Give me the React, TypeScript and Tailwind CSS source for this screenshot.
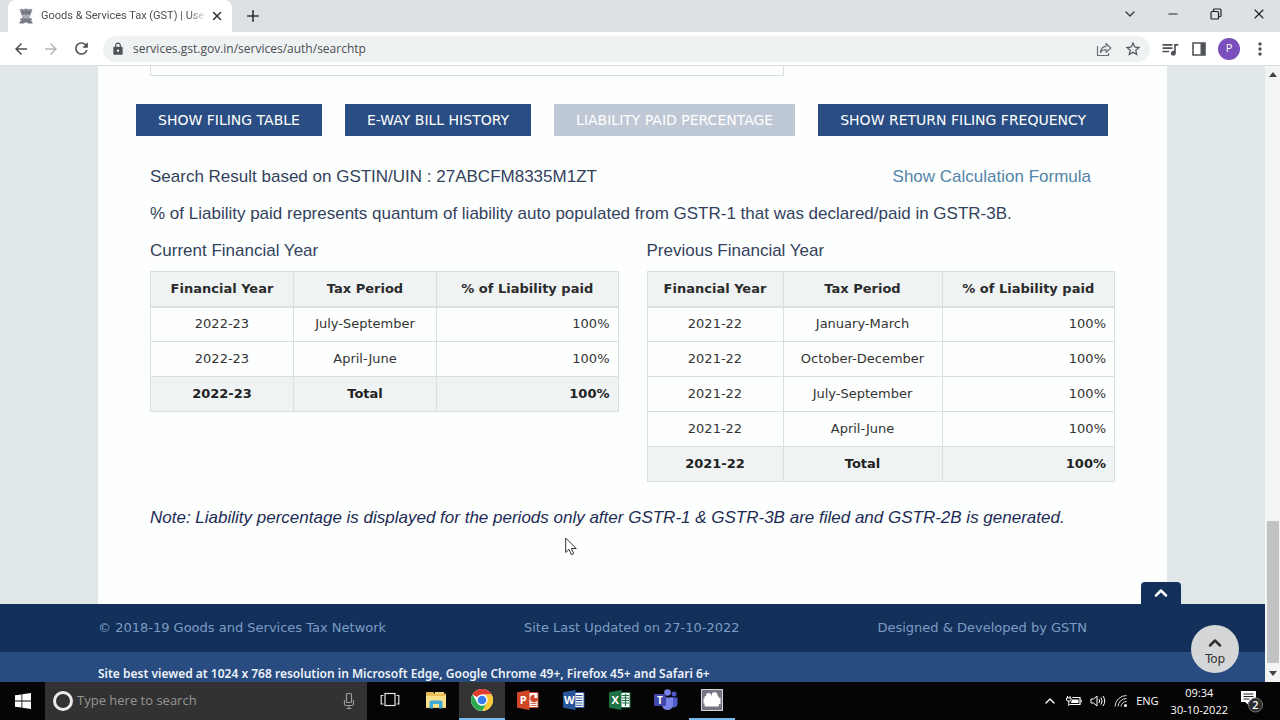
import { useState } from 'react';
import type { ReactNode } from 'react';
import { ChevronDown, ChevronUp, Minus, Plus, X } from 'lucide-react';
import { MdArrowBack, MdArrowForward, MdLock, MdMoreVert, MdQueueMusic, MdRefresh, MdStarBorder } from 'react-icons/md';

type Row = { year: string; period: string; paid: string };

const currentYear: Row[] = [
  { year: '2022-23', period: 'July-September', paid: '100%' },
  { year: '2022-23', period: 'April-June', paid: '100%' },
];

const previousYear: Row[] = [
  { year: '2021-22', period: 'January-March', paid: '100%' },
  { year: '2021-22', period: 'October-December', paid: '100%' },
  { year: '2021-22', period: 'July-September', paid: '100%' },
  { year: '2021-22', period: 'April-June', paid: '100%' },
];

const actions = [
  { label: 'SHOW FILING TABLE', disabled: false },
  { label: 'E-WAY BILL HISTORY', disabled: false },
  { label: 'LIABILITY PAID PERCENTAGE', disabled: true },
  { label: 'SHOW RETURN FILING FREQUENCY', disabled: false },
];

const EmblemIcon = () => (
  <svg viewBox="0 0 16 16" className="w-4 h-4 shrink-0" fill="#8d9098">
    <path d="M1.500 1.500Q4 .2 5.500 1.500 8-.6 10.500 1.500 12 .2 14.500 1.500L13.500 4l-1 3.500h-9L2.500 4z" />
    <path d="M4 7.500h8v3.500H4z" fill="#a9acb3" />
    <path d="M2 10.500h12v1.600H2zM3.500 12h9l2 2.200v1.300h-4L8 14.200l-2.500 1.300h-4v-1.300z" fill="#777a83" />
    <path d="M5.300 2.500v4.500M8 2v5.500M10.700 2.500v4.500M3 4.300h10" stroke="#62656e" strokeWidth=".8" fill="none" />
  </svg>
);

const RestoreIcon = () => (
  <svg viewBox="0 0 12 12" className="w-3 h-3" fill="none" stroke="#222" strokeWidth="1.200">
    <rect x="1" y="3.500" width="7.500" height="7.500" rx="1" />
    <path d="M3.500 3.500V2q0-1 1-1H10q1 0 1 1v5.500q0 1-1 1H8.500" />
  </svg>
);

const ShareIcon = () => (
  <svg viewBox="0 0 16 16" className="w-4 h-4" fill="none" stroke="#6b6f74" strokeWidth="1.200">
    <path d="M1.500 5v9.500h11V12" />
    <path d="M4.500 11.500c.3-4 2.500-6 5.500-6.200V2.500l4.800 4.500-4.800 4.300V8.500c-2.500 0-4.300.9-5.500 3z" strokeLinejoin="round" />
  </svg>
);

const SidePanelIcon = () => (
  <svg viewBox="0 0 14 14" className="w-3.5 h-3.5">
    <path d="M1 1h12v12H1z" fill="none" stroke="#4f5357" strokeWidth="1.600" />
    <path d="M8.500 1H13v12H8.500z" fill="#4f5357" />
  </svg>
);

const WindowsIcon = () => (
  <svg viewBox="0 0 16 16" className="w-4 h-4" fill="#fff">
    <path d="M0 2.300 6.500 1.400v6.200H0zM7.300 1.300 16 0v7.600H7.300zM0 8.400h6.500v6.200L0 13.700zM7.300 8.400H16V16l-8.700-1.300z" />
  </svg>
);

const MicIcon = () => (
  <svg viewBox="0 0 12 18" className="w-3 h-[18px]" fill="none" stroke="#9a9a9a" strokeWidth="1.200">
    <rect x="3.500" y="1.500" width="5" height="9" rx="1" />
    <path d="M1.500 8v4q0 1.500 1.500 1.500h6q1.500 0 1.500-1.500V8M6 13.500v3M3.500 16.500h5" />
  </svg>
);

const TaskViewIcon = () => (
  <svg viewBox="0 0 20 16" className="w-5 h-4" fill="none" stroke="#e6e6e6" strokeWidth="1.200">
    <rect x="5" y="1.500" width="10" height="12" />
    <path d="M3.500 3.500H1.200v8.500h2.300M16.500 3.500h2.300v8.500h-2.300" />
  </svg>
);

const ExplorerIcon = () => (
  <svg viewBox="0 0 20 18" className="w-5 h-[18px]">
    <path d="M0 2q0-1 1-1h6l1.500 1.500H19q1 0 1 1V17H0z" fill="#e8bd55" />
    <path d="M9 1h9v2H9z" fill="#f6d57a" />
    <path d="M0 5h20v11.500H0z" fill="#fae08d" />
    <path d="M3.500 17.500V11q0-1.500 1.500-1.500h10q1.500 0 1.500 1.500v6.500h-3.500V13H7v4.500z" fill="#3fa9d6" />
  </svg>
);

const ChromeIcon = () => (
  <svg viewBox="0 0 48 48" className="w-6 h-6">
    <circle cx="24" cy="24" r="22" fill="#fff" />
    <path d="M24 2a22 22 0 0 1 19.050 11H24a11 11 0 0 0-9.530 5.500L4.950 13A22 22 0 0 1 24 2z" fill="#e33b2e" />
    <path d="M43.050 13A22 22 0 0 1 24 46l9.530-16.500A11 11 0 0 0 33.500 18.500L31 13z" fill="#fcc934" />
    <path d="M4.950 13 14.470 29.500A11 11 0 0 0 33.530 29.500L24 46A22 22 0 0 1 4.950 13z" fill="#2da94f" />
    <circle cx="24" cy="24" r="11" fill="#fff" />
    <circle cx="24" cy="24" r="8.700" fill="#3a7df0" />
  </svg>
);

const OfficeIcon = ({ letter, color }: { letter: string; color: string }) => (
  <svg viewBox="0 0 22 20" className="w-[22px] h-5">
    <path d="M11 2.500h10v15H11z" fill="#fff" stroke={color} />
    {letter === 'P' && <path d="M17 5v3.500h3.500A3.500 3.500 0 1 1 17 5zM13.500 13.500h6M13.500 15.500h6" fill={color} stroke={color} strokeWidth=".8" />}
    {letter === 'W' && <path d="M13 5.500h6.500M13 8h6.500M13 10.500h6.500M13 13h6.500M13 15.300h6.500" stroke={color} strokeWidth="1" />}
    {letter === 'X' && <path d="M13 5.500h7M13 8h7M13 10.500h7M13 13h7M16.500 4v12" stroke={color} strokeWidth="1.200" />}
    <path d="M0 2.300 12.500 0v20L0 17.700z" fill={color} />
    <text x="6.200" y="14" textAnchor="middle" fontSize="11" fontWeight="700" fontFamily="Open Sans, sans-serif" fill="#fff">{letter}</text>
  </svg>
);

const TeamsIcon = () => (
  <svg viewBox="0 0 24 22" className="w-6 h-[22px]">
    <circle cx="20" cy="5" r="2.500" fill="#5059c9" />
    <circle cx="13.500" cy="3.500" r="3.300" fill="#7b83eb" />
    <path d="M16 8.500h7.500v6a4 4 0 0 1-6 3.500z" fill="#5059c9" />
    <path d="M8 8.500h11v7a5.500 5.500 0 0 1-11 0z" fill="#7b83eb" />
    <rect x="0" y="5" width="12" height="12" rx="1" fill="#4148a8" />
    <text x="6" y="14.500" textAnchor="middle" fontSize="10" fontWeight="700" fontFamily="Open Sans, sans-serif" fill="#fff">T</text>
  </svg>
);

const RecorderIcon = () => (
  <svg viewBox="0 0 22 22" className="w-[22px] h-[22px]">
    <rect x=".5" y=".5" width="21" height="21" fill="#777582" stroke="#d4d4da" />
    <circle cx="7.500" cy="6.500" r="2.500" fill="#fff" />
    <circle cx="13.500" cy="6.300" r="3" fill="#fff" />
    <path d="M4.500 7h12q1.500 0 1.500 1.500v.8l1.500-.6v6.600l-1.500-.6V16q0 1.500-1.500 1.500h-12Q3.500 17.500 3.500 16V8q0-1 1-1z" fill="#fff" />
    <path d="M2.500 9.500h2v5h-2z" fill="#fff" />
  </svg>
);

const BatteryIcon = () => (
  <svg viewBox="0 0 16 12" className="w-4 h-3" fill="none" stroke="#fff">
    <path d="M1.500 1v2M4 1v2M.5 3h4.500v2Q5 6 3.500 6H2Q.5 6 .5 5zM2.800 6v5" />
    <path d="M6.500 2.500H14v7H3.500" strokeWidth="1.200" />
    <path d="M6 4.500h6.500v3.500H5z" fill="#fff" stroke="none" />
    <path d="M15.200 4.500v3" />
  </svg>
);

const SpeakerIcon = () => (
  <svg viewBox="0 0 16 14" className="w-4 h-3.5" fill="none" stroke="#fff">
    <path d="M1 5h2.500L7 2v10L3.500 9H1z" />
    <path d="M9 5q1.300 2 0 4M11 3.500q2.300 3.500 0 7M13 2q3.500 5 0 10" />
  </svg>
);

const WifiIcon = () => (
  <svg viewBox="0 0 14 14" className="w-3.5 h-3.5" fill="none" stroke="#d8d8d8">
    <path d="M1 12.500A11.500 11.500 0 0 1 12.500 1.500M4 12.500a8.500 8.500 0 0 1 8.500-8M7 12.500a5.500 5.500 0 0 1 5.500-5" />
    <circle cx="11.500" cy="11.500" r="1.500" fill="#fff" stroke="none" />
  </svg>
);

const NotificationIcon = () => (
  <svg viewBox="0 0 24 24" className="w-6 h-6">
    <path d="M1 2h15v11H8.500v3L5 13H1z" fill="#fff" />
    <path d="M3.500 5h10M3.500 7.500h10M3.500 10h6" stroke="#222" />
    <circle cx="15.500" cy="16" r="7" fill="#2c2c2c" stroke="#777" />
    <text x="15.500" y="20" textAnchor="middle" fontSize="11" fontWeight="600" fontFamily="Open Sans, sans-serif" fill="#fff">2</text>
  </svg>
);

const BrowserHeader = () => {
  const [url, setUrl] = useState('services.gst.gov.in/services/auth/searchtp');

  return (
    <header className="shrink-0 bg-[#dce1e5] font-['Open_Sans',sans-serif]">
      <div className="flex h-8 items-center">
        <div className="ml-2 flex h-full w-56 items-center rounded-t-lg bg-white pl-2.5 pr-2">
          <EmblemIcon />
          <span className="ml-[7px] flex-1 overflow-hidden whitespace-nowrap font-[Roboto,sans-serif] text-[11px] text-[#4b4e52] mask-r-from-90%">
            Goods &amp; Services Tax (GST) | Use
          </span>
          <button aria-label="Close tab" className="ml-1">
            <X className="h-3.5 w-3.5 text-[#333]" strokeWidth={2.5} />
          </button>
        </div>
        <button aria-label="New tab" className="ml-3">
          <Plus className="h-[18px] w-[18px] text-[#333]" strokeWidth={2.2} />
        </button>
        <div className="ml-auto flex h-full items-center pb-1">
          <button aria-label="Search tabs" className="flex w-[43px] justify-center"><ChevronDown className="h-4 w-4 text-[#333]" strokeWidth={1.8} /></button>
          <button aria-label="Minimize" className="flex w-[43px] justify-center"><Minus className="h-3.5 w-3.5 text-[#222]" strokeWidth={2} /></button>
          <button aria-label="Restore" className="flex w-[43px] justify-center"><RestoreIcon /></button>
          <button aria-label="Close" className="flex w-[43px] justify-center"><X className="h-4 w-4 text-[#222]" strokeWidth={1.6} /></button>
        </div>
      </div>
      <div className="flex h-[34px] items-center border-b border-[#dcdfe1] bg-white pl-3 pr-2.5">
        <button aria-label="Back"><MdArrowBack className="h-[18px] w-[18px] text-[#4c4f53]" /></button>
        <button aria-label="Forward" className="ml-3"><MdArrowForward className="h-[18px] w-[18px] text-[#b4b6b9]" /></button>
        <button aria-label="Reload" className="ml-3"><MdRefresh className="h-[19px] w-[19px] text-[#4c4f53]" /></button>
        <div className="ml-3 flex h-[26px] flex-1 items-center rounded-full bg-[#eff2f3] pl-2 pr-2">
          <MdLock className="h-3.5 w-3.5 shrink-0 text-[#4f5357]" />
          <input
            type="text"
            aria-label="Address"
            value={url}
            onChange={(e) => setUrl(e.target.value)}
            className="ml-2 min-w-0 flex-1 bg-transparent text-[12px] text-[#4a4d51] outline-none"
          />
          <button aria-label="Share"><ShareIcon /></button>
          <button aria-label="Bookmark" className="ml-3"><MdStarBorder className="h-[18px] w-[18px] text-[#4f5357]" /></button>
        </div>
        <button aria-label="Media" className="ml-2.5"><MdQueueMusic className="h-5 w-5 text-[#4f5357]" /></button>
        <button aria-label="Side panel" className="ml-3"><SidePanelIcon /></button>
        <button aria-label="Profile" className="ml-3 h-[22px] w-[22px] rounded-full bg-[#7a4fbb] text-[11px] text-white">P</button>
        <button aria-label="Menu" className="ml-2.5"><MdMoreVert className="h-5 w-5 text-[#4f5357]" /></button>
      </div>
    </header>
  );
};

type TableProps = { title: string; rows: Row[]; cols: [string, string] };

const LiabilityTable = ({ title, rows, cols }: TableProps) => (
  <section className="flex-1">
    <h2 className="text-[17px] leading-5 text-[#33425c]">{title}</h2>
    <table className="mt-2.5 w-full table-fixed border-collapse font-['DejaVu_Sans',sans-serif] text-[13px] text-[#333]">
      <colgroup>
        <col className={cols[0]} />
        <col className={cols[1]} />
        <col />
      </colgroup>
      <thead>
        <tr className="h-[35px] bg-[#f0f3f4] text-[#2b2b2b]">
          <th className="border border-b-2 border-[#dcdfdf] font-bold">Financial Year</th>
          <th className="border border-b-2 border-[#dcdfdf] font-bold">Tax Period</th>
          <th className="border border-b-2 border-[#dcdfdf] font-bold">% of Liability paid</th>
        </tr>
      </thead>
      <tbody className="text-center">
        {rows.map((row) => (
          <tr key={row.period} className="h-[35px]">
            <td className="border border-[#dcdfdf]">{row.year}</td>
            <td className="border border-[#dcdfdf]">{row.period}</td>
            <td className="border border-[#dcdfdf] pr-2 text-right">{row.paid}</td>
          </tr>
        ))}
        <tr className="h-[35px] bg-[#f0f3f4] font-bold text-[#222]">
          <td className="border border-[#dcdfdf]">{rows[0].year}</td>
          <td className="border border-[#dcdfdf]">Total</td>
          <td className="border border-[#dcdfdf] pr-2 text-right">100%</td>
        </tr>
      </tbody>
    </table>
  </section>
);

const Footer = () => (
  <footer className="relative flex-1 bg-[#284b80] font-['DejaVu_Sans',sans-serif]">
    <div className="flex h-12 items-center justify-between bg-[#12305a] pl-[98px] pr-[178px] text-[13px] text-[#7c9cc4]">
      <span>© 2018-19 Goods and Services Tax Network</span>
      <span>Site Last Updated on 27-10-2022</span>
      <span>Designed &amp; Developed by GSTN</span>
    </div>
    <p className="pl-[98px] pt-3.5 font-['Noto_Sans',sans-serif] text-[12px] font-semibold leading-4 text-[#eef3fa]">
      Site best viewed at 1024 x 768 resolution in Microsoft Edge, Google Chrome 49+, Firefox 45+ and Safari 6+
    </p>
    {/* Footer toggle tab */}
    <button aria-label="Toggle footer" className="absolute -top-[22px] right-[84px] flex h-[22px] w-10 items-center justify-center rounded-t bg-[#12305a]">
      <ChevronUp className="h-5 w-5 text-white" strokeWidth={3} />
    </button>
    <button className="absolute right-[26px] top-[21px] flex h-12 w-12 flex-col items-center justify-center rounded-full bg-[#d5d6d7] text-[12px] leading-3 text-[#333]">
      <ChevronUp className="h-5 w-5" strokeWidth={3} />
      Top
    </button>
  </footer>
);

const Scrollbar = () => (
  <div className="flex w-[15px] shrink-0 flex-col items-center bg-[#f3f4f4] py-1.5">
    <svg viewBox="0 0 8 5" className="w-2 h-[5px]"><path d="M0 5 4 0l4 5z" fill="#444" /></svg>
    <div className="flex-1" />
    <div className="mb-2 h-[142px] w-3 bg-[#c1c2c3]" />
    <svg viewBox="0 0 8 5" className="w-2 h-[5px]"><path d="M0 0h8L4 5z" fill="#444" /></svg>
  </div>
);

const TaskButton = ({ label, state, children }: { label: string; state?: 'active' | 'open'; children: ReactNode }) => (
  <button
    aria-label={label}
    className={`flex h-full w-[46px] items-center justify-center border-b-2 ${state === 'active' ? 'border-[#76b9ed] bg-[#333]' : state === 'open' ? 'border-[#76b9ed]' : 'border-transparent'}`}
  >
    {children}
  </button>
);

const Taskbar = () => (
  <div className="flex h-[38px] shrink-0 items-center bg-[#050505] font-['Open_Sans',sans-serif] text-white">
    <button aria-label="Start" className="flex h-full w-[45px] items-center justify-center"><WindowsIcon /></button>
    <div className="flex h-full w-[322px] items-center bg-[#323232] px-2">
      <span className="mr-1 h-5 w-5 shrink-0 rounded-full border-3 border-[#ececec]" />
      <input
        type="text"
        aria-label="Search"
        placeholder="Type here to search"
        className="min-w-0 flex-1 bg-transparent text-[13px] outline-none placeholder:text-[#959595]"
      />
      <span className="mr-1"><MicIcon /></span>
    </div>
    <TaskButton label="Task view"><TaskViewIcon /></TaskButton>
    <TaskButton label="File Explorer"><ExplorerIcon /></TaskButton>
    <TaskButton label="Chrome" state="active"><ChromeIcon /></TaskButton>
    <TaskButton label="PowerPoint"><OfficeIcon letter="P" color="#d04727" /></TaskButton>
    <TaskButton label="Word"><OfficeIcon letter="W" color="#2a5699" /></TaskButton>
    <TaskButton label="Excel"><OfficeIcon letter="X" color="#1e7145" /></TaskButton>
    <TaskButton label="Teams"><TeamsIcon /></TaskButton>
    <TaskButton label="Recorder" state="open"><RecorderIcon /></TaskButton>
    <div className="ml-auto flex items-center pr-4">
      <ChevronUp className="h-4 w-4" strokeWidth={2} />
      <span className="ml-2"><BatteryIcon /></span>
      <span className="ml-2"><SpeakerIcon /></span>
      <span className="ml-2"><WifiIcon /></span>
      <span className="ml-2 text-[11px]">ENG</span>
      <div className="ml-3 text-center text-[11px] leading-[17px]">
        <div>09:34</div>
        <div>30-10-2022</div>
      </div>
      <button aria-label="Notifications" className="ml-3"><NotificationIcon /></button>
    </div>
  </div>
);

const App = () => {
  return (
    <div className="flex h-screen flex-col overflow-hidden font-['Liberation_Sans',Arial,sans-serif]">
      <BrowserHeader />
      <div className="flex min-h-0 flex-1">
        <div className="flex min-w-0 flex-1 flex-col overflow-hidden bg-[#e0e7e8]">
          <main className="mx-[98px] bg-[#fdfefe] px-[38px] pb-[76px]">
            <div className="ml-[14px] h-2.5 w-[634px] border border-t-0 border-[#dcdfe1]" />
            <div className="mt-7 flex gap-[23px] font-['DejaVu_Sans',sans-serif]">
              {actions.map((action) => (
                <button
                  key={action.label}
                  disabled={action.disabled}
                  className={`h-8 whitespace-nowrap px-[22px] text-[14px] text-white ${action.disabled ? 'bg-[#bfc8d5]' : 'bg-[#2a4e83]'}`}
                >
                  {action.label}
                </button>
              ))}
            </div>
            <div className="px-[14px] text-[17px] leading-5 text-[#33425c]">
              <div className="mt-[31px] flex justify-between pr-6">
                <h1>Search Result based on GSTIN/UIN : 27ABCFM8335M1ZT</h1>
                <a href="#formula" className="text-[#5484a8]">Show Calculation Formula</a>
              </div>
              <p className="mt-[17px]">
                % of Liability paid represents quantum of liability auto populated from GSTR-1 that was declared/paid in GSTR-3B.
              </p>
              <div className="mt-[17px] flex items-start gap-7">
                <LiabilityTable title="Current Financial Year" rows={currentYear} cols={['w-[143px]', 'w-[143px]']} />
                <LiabilityTable title="Previous Financial Year" rows={previousYear} cols={['w-[136px]', 'w-[159px]']} />
              </div>
              <p className="mt-[26px] italic text-[#1d2c55]">
                Note: Liability percentage is displayed for the periods only after GSTR-1 &amp; GSTR-3B are filed and GSTR-2B is generated.
              </p>
            </div>
          </main>
          <Footer />
        </div>
        <Scrollbar />
      </div>
      <Taskbar />
      {/* Mouse pointer */}
      <svg viewBox="0 0 12 19" className="pointer-events-none absolute left-[565px] top-[537px] h-[19px] w-3">
        <path d="M.7 1v14.500L4 12.300l2.300 5.400 2.400-1-2.300-5.200h4.800z" fill="#fff" stroke="#333" />
      </svg>
    </div>
  );
};

export default App;
